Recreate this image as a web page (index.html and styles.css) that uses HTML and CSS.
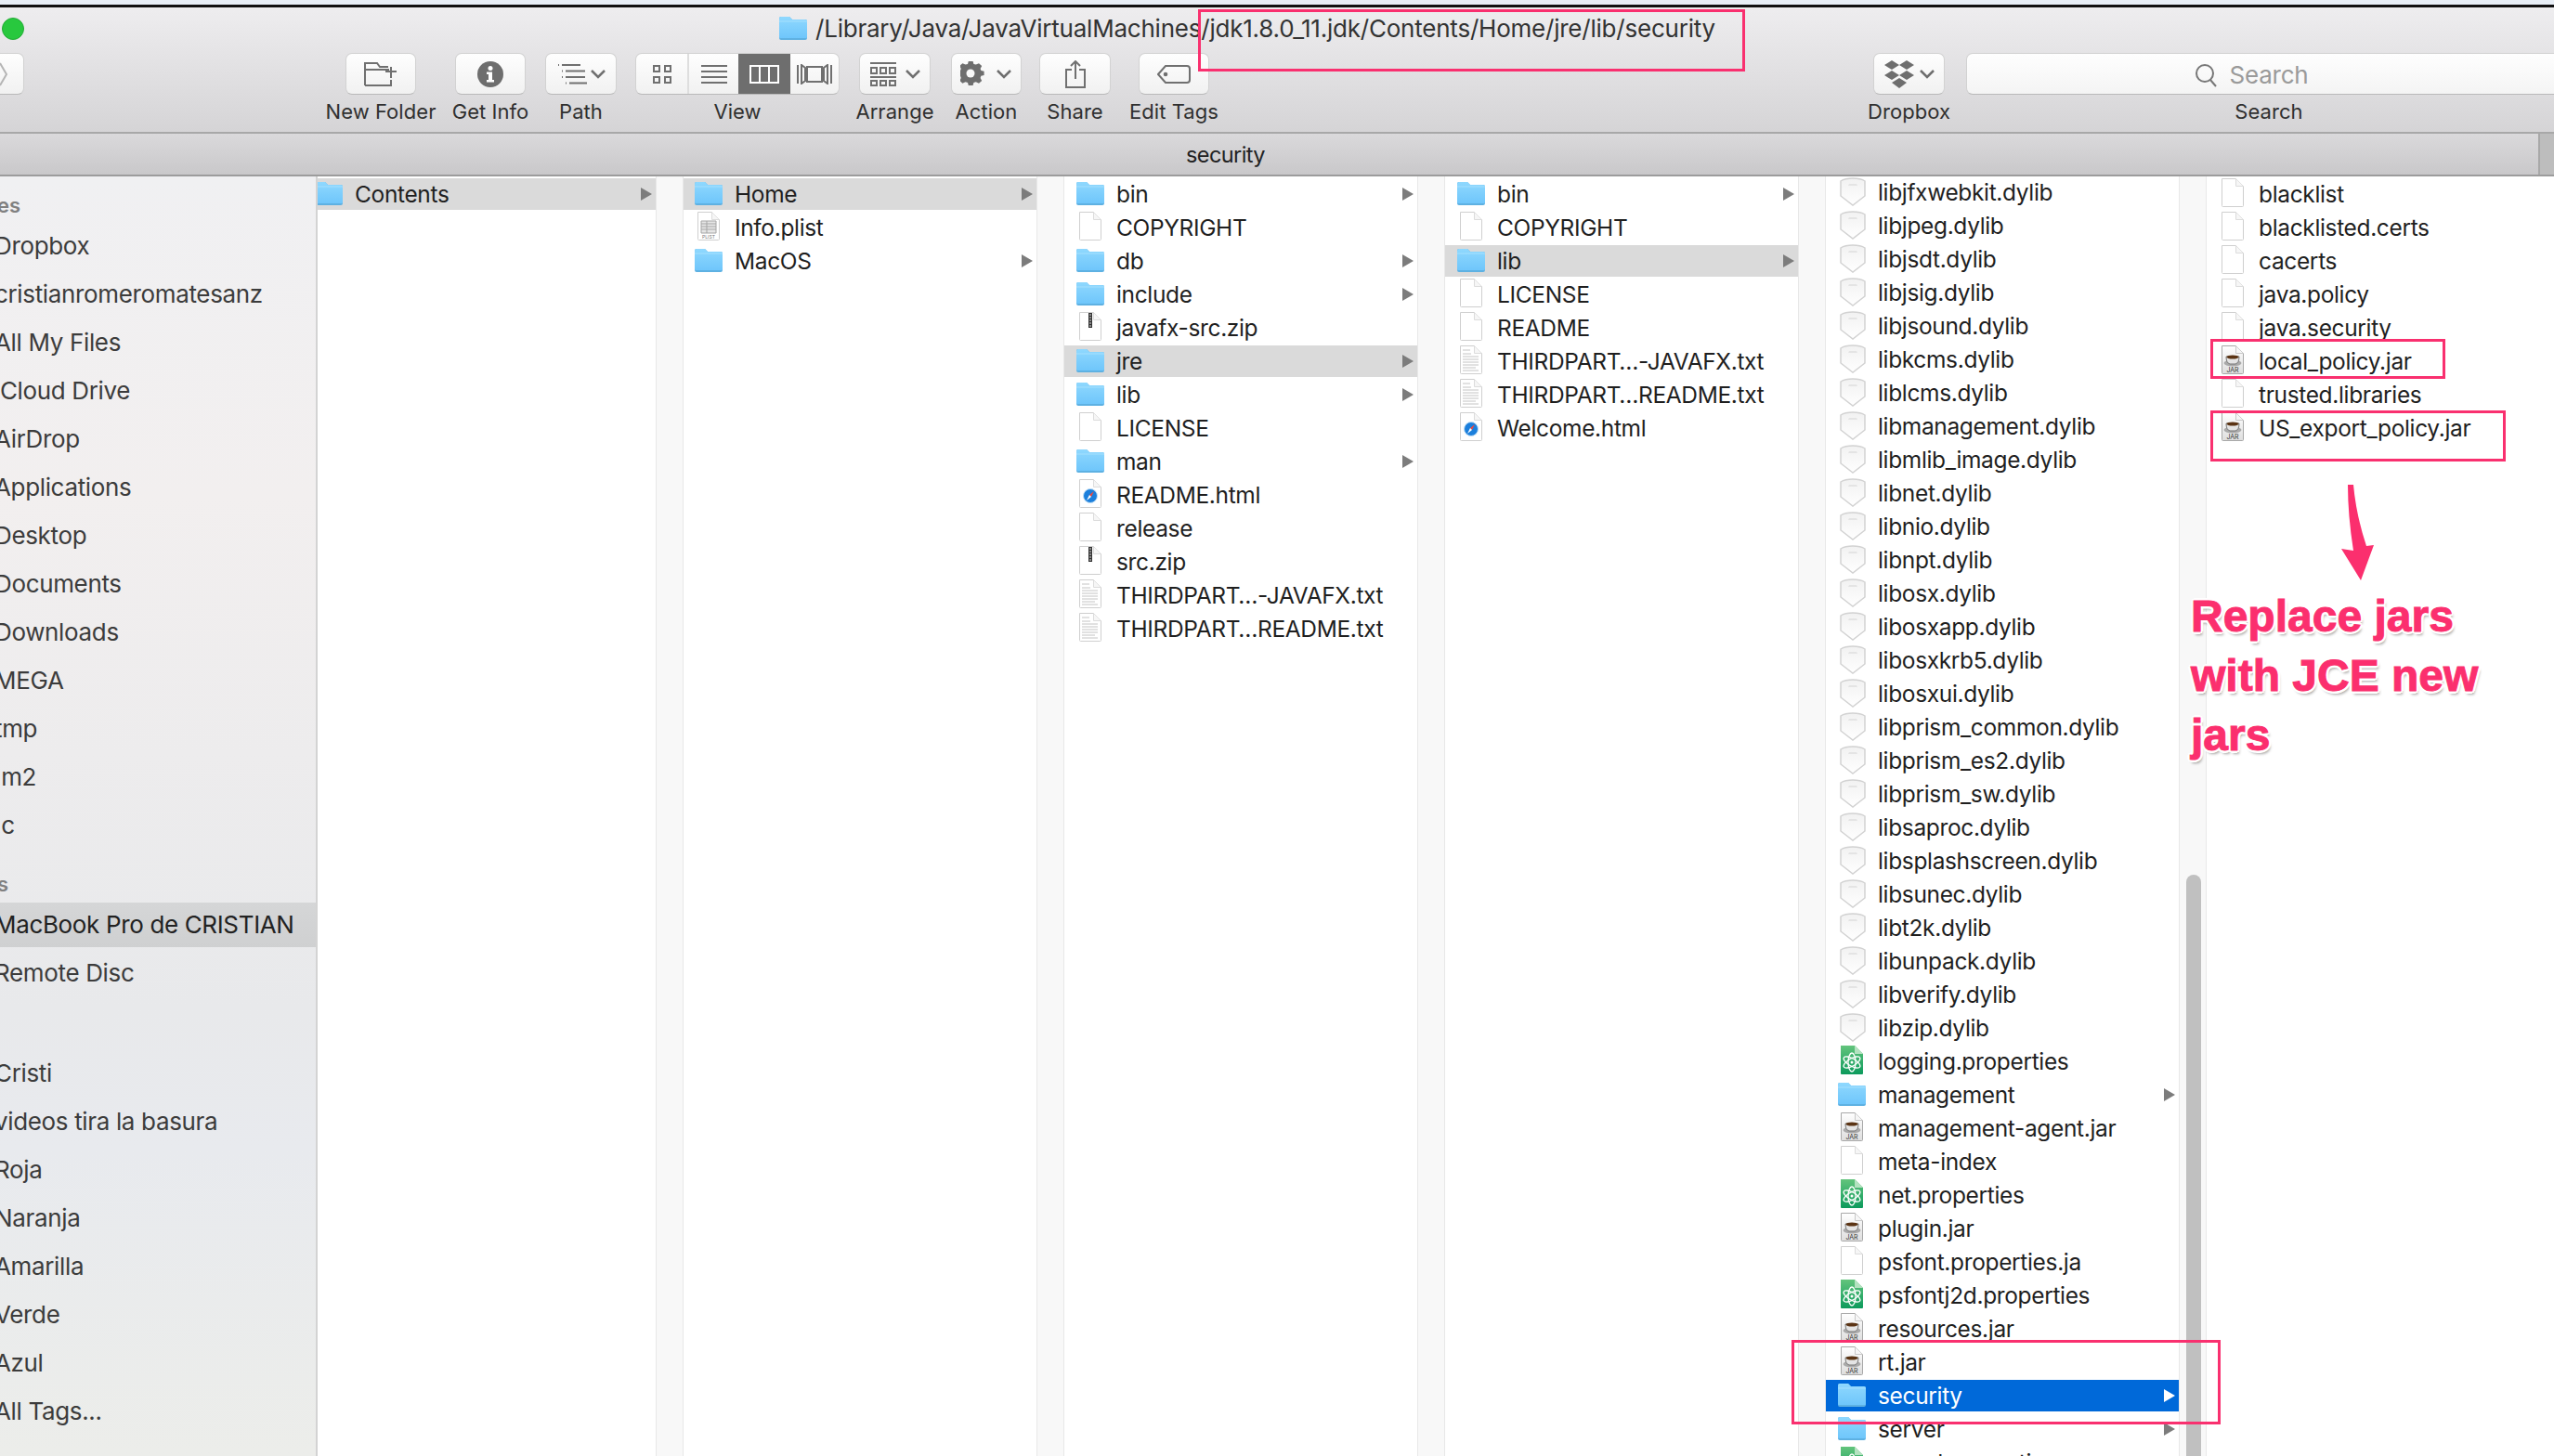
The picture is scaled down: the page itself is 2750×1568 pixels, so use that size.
FILE: index.html
```html
<!DOCTYPE html>
<html lang="en">

<head>
    <meta charset="UTF-8">
    <title>security</title>
    <link rel="stylesheet" href="styles.css">
</head>

<body>
    <!-- Icon set used by the file rows -->
    <svg class="defs" width="0" height="0">
        <defs>
            <linearGradient id="folderFill" x1="0" y1="0" x2="0" y2="1">
                <stop offset="0" stop-color="#8fd8fe"/>
                <stop offset="1" stop-color="#6fc6fb"/>
            </linearGradient>
            <linearGradient id="propsFill" x1="0" y1="0" x2="0" y2="1">
                <stop offset="0" stop-color="#63c47c"/>
                <stop offset="1" stop-color="#0c9a5c"/>
            </linearGradient>
            <linearGradient id="jarFill" x1="0" y1="0" x2="0" y2="1">
                <stop offset="0" stop-color="#ffffff"/>
                <stop offset="1" stop-color="#dedede"/>
            </linearGradient>
            <linearGradient id="shieldFill" x1="0" y1="0" x2="0" y2="1">
                <stop offset="0" stop-color="#f1f1f1"/>
                <stop offset="1" stop-color="#ffffff"/>
            </linearGradient>
            <symbol id="i-folder" viewBox="0 0 30 34">
                <path d="M0 6q0-2 2-2h9l3 3h14q2 0 2 2v18q0 2-2 2H2q-2 0-2-2z" fill="#5eb1e2"/>
                <path d="M0 6q0-2 2-2h9l3 3h14q2 0 2 2v17q0 1-1 1H1q-1 0-1-1z" fill="url(#folderFill)"/>
                <path d="M0 9h30" stroke="#a6e0fe" stroke-width="1"/>
            </symbol>
            <symbol id="i-file" viewBox="0 0 30 34">
                <path d="M3.500.5h15l8 8v21q0 1-1 1h-21q-1 0-1-1z" fill="#fff" stroke="#cfcfcf"/>
                <path d="M18.500.5v8h8" fill="#f6f6f6" stroke="#dcdcdc"/>
            </symbol>
            <symbol id="i-zip" viewBox="0 0 30 34">
                <use href="#i-file"/>
                <path d="M13 1h4v16h-4z" fill="#333"/>
                <path d="M14 3h2M14 6h2M14 9h2M14 12h2M14 15h2" stroke="#ddd"/>
            </symbol>
            <symbol id="i-txt" viewBox="0 0 30 34">
                <use href="#i-file"/>
                <path d="M6 5h8M6 9h9M6 12h17M6 15h17M6 18h17M6 21h17M6 24h14M6 27h17" stroke="#c4c4c4"/>
            </symbol>
            <symbol id="i-html" viewBox="0 0 30 34">
                <use href="#i-file"/>
                <circle cx="15" cy="18" r="7.500" fill="#1b7fdc" stroke="#bcdcf5"/>
                <path d="M19 13l-5 4 2 2z" fill="#f0473c"/>
                <path d="M11 23l5-4-2-2z" fill="#fff"/>
            </symbol>
            <symbol id="i-plist" viewBox="0 0 30 34">
                <use href="#i-file"/>
                <path d="M7 10h16v13H7z" fill="#e6e6e6" stroke="#a5a5a5"/>
                <path d="M7 13h16M7 16h16M7 19h16M13 10v13" stroke="#a5a5a5"/>
                <text x="15" y="29" class="ic-label">PLIST</text>
            </symbol>
            <symbol id="i-jar" viewBox="0 0 30 34">
                <path d="M3.500.5h15l8 8v21q0 1-1 1h-21q-1 0-1-1z" fill="url(#jarFill)" stroke="#a8a8a8"/>
                <path d="M18.500.5v8h8" fill="#f6f6f6" stroke="#c8c8c8"/>
                <ellipse cx="15" cy="19" rx="9.500" ry="3.500" fill="#aaa"/>
                <path d="M8 12h14q0 7-4 8h-6q-4-1-4-8z" fill="#e4e4e4" stroke="#777"/>
                <ellipse cx="15" cy="12.500" rx="6.500" ry="2" fill="#5b3414"/>
                <text x="15" y="29" class="ic-label ic-jar">JAR</text>
            </symbol>
            <symbol id="i-props" viewBox="0 0 30 34">
                <path d="M3 0h15l9 9v21q0 1-1 1H4q-1 0-1-1z" fill="url(#propsFill)"/>
                <path d="M18 0v9h9z" fill="#b4e2c0"/>
                <g fill="none" stroke="#fff" stroke-width="1.300">
                    <ellipse cx="15" cy="18" rx="10" ry="4" transform="rotate(30 15 18)"/>
                    <ellipse cx="15" cy="18" rx="10" ry="4" transform="rotate(-30 15 18)"/>
                    <ellipse cx="15" cy="18" rx="10" ry="4" transform="rotate(90 15 18)"/>
                </g>
                <circle cx="15" cy="18" r="1.500" fill="#fff"/>
            </symbol>
            <symbol id="i-shield" viewBox="0 0 30 34">
                <path d="M16 2C11 2 6 3 3 5v16l13 10 13-10V5c-3-2-8-3-13-3z" fill="url(#shieldFill)" stroke="#d2d2d2" stroke-width="1.500"/>
                <path d="M12 8h8l1 2h-10z" fill="#e4e4e4"/>
            </symbol>
            <symbol id="i-arrow" viewBox="0 0 12 14">
                <path d="M0 0l12 7-12 7z"/>
            </symbol>
        </defs>
    </svg>

    <div class="window">
        <div class="strip"></div>

        <header class="chrome">
            <div class="title">
                <div class="light"></div>
                <svg class="ic"><use href="#i-folder"/></svg>
                <span>/Library/Java/JavaVirtualMachines/jdk1.8.0_11.jdk/Contents/Home/jre/lib/security</span>
            </div>

            <div class="toolbar">
                <div class="tool t-nav">
                    <div class="btn btn-nav">
                        <svg width="10" height="26" viewBox="0 0 10 26"><path d="M1 1l7 12-7 12" fill="none" stroke="#b5b5b5" stroke-width="2"/></svg>
                    </div>
                </div>
                <div class="tool t-newfolder">
                    <div class="btn">
                        <svg width="36" height="26" viewBox="0 0 36 26" class="tb"><path d="M1 25V1h13l3 4h9M1 8h26M1 25h28v-6M29 5v12M23 10h12"/></svg>
                    </div>
                    <span>New Folder</span>
                </div>
                <div class="tool t-info">
                    <div class="btn">
                        <svg width="28" height="28" viewBox="0 0 28 28"><circle cx="14" cy="14" r="14" fill="#6e6e6e"/><circle cx="14" cy="7.500" r="2.500" fill="#fff"/><path d="M10 11.500h6V20h2v2.500h-8V20h2v-6h-2z" fill="#fff"/></svg>
                    </div>
                    <span>Get Info</span>
                </div>
                <div class="tool t-path">
                    <div class="btn">
                        <svg width="56" height="22" viewBox="0 0 56 22" class="tb"><path d="M3 1h1M7 1h20M7 7.500h1M11 7.500h21M7 14h1M11 14h21M11 20.500h1M15 20.500h19"/><path d="M39 7l7 7 7-7" stroke-width="2.500"/></svg>
                    </div>
                    <span>Path</span>
                </div>
                <div class="tool t-view">
                    <div class="segs">
                        <div class="seg seg-a">
                            <svg width="20" height="20" viewBox="0 0 20 20" class="tb"><path d="M1 1h6v6H1zM13 1h6v6h-6zM1 13h6v6H1zM13 13h6v6h-6z"/></svg>
                        </div>
                        <div class="seg seg-b">
                            <svg width="28" height="20" viewBox="0 0 28 20" class="tb"><path d="M0 1h28M0 7h28M0 13h28M0 19h28"/></svg>
                        </div>
                        <div class="seg seg-c">
                            <svg width="32" height="20" viewBox="0 0 32 20" class="tb tb-on"><path d="M1 1h30v18H1zM11 1v18M21 1v18"/></svg>
                        </div>
                        <div class="seg seg-d">
                            <svg width="38" height="22" viewBox="0 0 38 22" class="tb"><path d="M1 1v20M5 1v20l4-3V4zM37 1v20M33 1v20l-4-3V4zM11 3h16v16H11z"/></svg>
                        </div>
                    </div>
                    <span>View</span>
                </div>
                <div class="tool t-arrange">
                    <div class="btn">
                        <svg width="56" height="26" viewBox="0 0 56 26" class="tb"><path d="M1 1h28M1 16h28M2 6h6v6H2zM12 6h6v6h-6zM22 6h6v6h-6zM2 20h6v5H2zM12 20h6v5h-6zM22 20h6v5h-6z"/><path d="M40 9l7 7 7-7" stroke-width="2.500"/></svg>
                    </div>
                    <span>Arrange</span>
                </div>
                <div class="tool t-action">
                    <div class="btn">
                        <svg width="56" height="28" viewBox="0 0 56 28"><path d="M11 0h6l1 4 3 1 4-2 4 4-2 4 1 3 4 1v6l-4 1-1 3 2 4-4 4-4-2-3 1-1 4h-6l-1-4-3-1-4 2-4-4 2-4-1-3-4-1v-6l4-1 1-3-2-4 4-4 4 2 3-1z" transform="scale(.8 .72)" fill="#6e6e6e"/><circle cx="11" cy="13" r="4.500" fill="#f8f8f8"/><path d="M40 10l7 7 7-7" fill="none" stroke="#6e6e6e" stroke-width="2.500"/></svg>
                    </div>
                    <span>Action</span>
                </div>
                <div class="tool t-share">
                    <div class="btn">
                        <svg width="22" height="30" viewBox="0 0 22 30" class="tb"><path d="M7 10H1v19h20V10h-6M11 20V1M6 6l5-5 5 5"/></svg>
                    </div>
                    <span>Share</span>
                </div>
                <div class="tool t-tags">
                    <div class="btn">
                        <svg width="36" height="20" viewBox="0 0 36 20" class="tb"><path d="M9 1h23q3 0 3 3v12q0 3-3 3H9l-8-9z"/><circle cx="9" cy="10" r="1.300" fill="#6e6e6e"/></svg>
                    </div>
                    <span>Edit Tags</span>
                </div>
                <div class="tool t-dropbox">
                    <div class="btn">
                        <svg width="56" height="30" viewBox="0 0 56 30"><g fill="#6e6e6e"><path d="M9 0l8 5-8 5-8-5zM25 0l8 5-8 5-8-5zM9 11l8 5-8 5-8-5zM25 11l8 5-8 5-8-5zM17 19l8 5-8 6-8-6z"/></g><path d="M40 11l7 7 7-7" fill="none" stroke="#6e6e6e" stroke-width="2.500"/></svg>
                    </div>
                    <span>Dropbox</span>
                </div>
                <div class="tool t-search">
                    <div class="search-box">
                        <svg width="24" height="26" viewBox="0 0 24 26" fill="none" stroke="#777" stroke-width="2"><circle cx="10" cy="11" r="9"/><path d="M16 18l6 7"/></svg>
                        <span class="placeholder">Search</span>
                    </div>
                    <span>Search</span>
                </div>
            </div>
        </header>

        <div class="pathbar">
            <span class="path-name">security</span>
            <div class="path-end"></div>
        </div>

        <div class="browser">
            <aside class="side">
                <div class="side-head">Favorites</div>
                <div class="side-item">Dropbox</div>
                <div class="side-item">cristianromeromatesanz</div>
                <div class="side-item">All My Files</div>
                <div class="side-item">iCloud Drive</div>
                <div class="side-item">AirDrop</div>
                <div class="side-item">Applications</div>
                <div class="side-item">Desktop</div>
                <div class="side-item">Documents</div>
                <div class="side-item">Downloads</div>
                <div class="side-item">MEGA</div>
                <div class="side-item">tmp</div>
                <div class="side-item">.m2</div>
                <div class="side-item">.c</div>
                <div class="side-head head-gap">Devices</div>
                <div class="side-item side-sel">MacBook Pro de CRISTIAN</div>
                <div class="side-item">Remote Disc</div>
                <div class="side-head head-tags">Tags</div>
                <div class="side-item">Cristi</div>
                <div class="side-item">videos tira la basura</div>
                <div class="side-item">Roja</div>
                <div class="side-item">Naranja</div>
                <div class="side-item">Amarilla</div>
                <div class="side-item">Verde</div>
                <div class="side-item">Azul</div>
                <div class="side-item">All Tags...</div>
            </aside>

            <div class="col col-1">
                <div class="row row-hi"><svg class="ic"><use href="#i-folder"/></svg><span>Contents</span><svg class="arr"><use href="#i-arrow"/></svg></div>
            </div>

            <div class="col col-2">
                <div class="row row-hi"><svg class="ic"><use href="#i-folder"/></svg><span>Home</span><svg class="arr"><use href="#i-arrow"/></svg></div>
                <div class="row"><svg class="ic"><use href="#i-plist"/></svg><span>Info.plist</span></div>
                <div class="row"><svg class="ic"><use href="#i-folder"/></svg><span>MacOS</span><svg class="arr"><use href="#i-arrow"/></svg></div>
            </div>

            <div class="col">
                <div class="row"><svg class="ic"><use href="#i-folder"/></svg><span>bin</span><svg class="arr"><use href="#i-arrow"/></svg></div>
                <div class="row"><svg class="ic"><use href="#i-file"/></svg><span>COPYRIGHT</span></div>
                <div class="row"><svg class="ic"><use href="#i-folder"/></svg><span>db</span><svg class="arr"><use href="#i-arrow"/></svg></div>
                <div class="row"><svg class="ic"><use href="#i-folder"/></svg><span>include</span><svg class="arr"><use href="#i-arrow"/></svg></div>
                <div class="row"><svg class="ic"><use href="#i-zip"/></svg><span>javafx-src.zip</span></div>
                <div class="row row-hi"><svg class="ic"><use href="#i-folder"/></svg><span>jre</span><svg class="arr"><use href="#i-arrow"/></svg></div>
                <div class="row"><svg class="ic"><use href="#i-folder"/></svg><span>lib</span><svg class="arr"><use href="#i-arrow"/></svg></div>
                <div class="row"><svg class="ic"><use href="#i-file"/></svg><span>LICENSE</span></div>
                <div class="row"><svg class="ic"><use href="#i-folder"/></svg><span>man</span><svg class="arr"><use href="#i-arrow"/></svg></div>
                <div class="row"><svg class="ic"><use href="#i-html"/></svg><span>README.html</span></div>
                <div class="row"><svg class="ic"><use href="#i-file"/></svg><span>release</span></div>
                <div class="row"><svg class="ic"><use href="#i-zip"/></svg><span>src.zip</span></div>
                <div class="row"><svg class="ic"><use href="#i-txt"/></svg><span>THIRDPART…-JAVAFX.txt</span></div>
                <div class="row"><svg class="ic"><use href="#i-txt"/></svg><span>THIRDPART…README.txt</span></div>
            </div>

            <div class="col">
                <div class="row"><svg class="ic"><use href="#i-folder"/></svg><span>bin</span><svg class="arr"><use href="#i-arrow"/></svg></div>
                <div class="row"><svg class="ic"><use href="#i-file"/></svg><span>COPYRIGHT</span></div>
                <div class="row row-hi"><svg class="ic"><use href="#i-folder"/></svg><span>lib</span><svg class="arr"><use href="#i-arrow"/></svg></div>
                <div class="row"><svg class="ic"><use href="#i-file"/></svg><span>LICENSE</span></div>
                <div class="row"><svg class="ic"><use href="#i-file"/></svg><span>README</span></div>
                <div class="row"><svg class="ic"><use href="#i-txt"/></svg><span>THIRDPART…-JAVAFX.txt</span></div>
                <div class="row"><svg class="ic"><use href="#i-txt"/></svg><span>THIRDPART…README.txt</span></div>
                <div class="row"><svg class="ic"><use href="#i-html"/></svg><span>Welcome.html</span></div>
            </div>

            <div class="col col-5">
                <div class="row"><svg class="ic"><use href="#i-shield"/></svg><span>libjfxwebkit.dylib</span></div>
                <div class="row"><svg class="ic"><use href="#i-shield"/></svg><span>libjpeg.dylib</span></div>
                <div class="row"><svg class="ic"><use href="#i-shield"/></svg><span>libjsdt.dylib</span></div>
                <div class="row"><svg class="ic"><use href="#i-shield"/></svg><span>libjsig.dylib</span></div>
                <div class="row"><svg class="ic"><use href="#i-shield"/></svg><span>libjsound.dylib</span></div>
                <div class="row"><svg class="ic"><use href="#i-shield"/></svg><span>libkcms.dylib</span></div>
                <div class="row"><svg class="ic"><use href="#i-shield"/></svg><span>liblcms.dylib</span></div>
                <div class="row"><svg class="ic"><use href="#i-shield"/></svg><span>libmanagement.dylib</span></div>
                <div class="row"><svg class="ic"><use href="#i-shield"/></svg><span>libmlib_image.dylib</span></div>
                <div class="row"><svg class="ic"><use href="#i-shield"/></svg><span>libnet.dylib</span></div>
                <div class="row"><svg class="ic"><use href="#i-shield"/></svg><span>libnio.dylib</span></div>
                <div class="row"><svg class="ic"><use href="#i-shield"/></svg><span>libnpt.dylib</span></div>
                <div class="row"><svg class="ic"><use href="#i-shield"/></svg><span>libosx.dylib</span></div>
                <div class="row"><svg class="ic"><use href="#i-shield"/></svg><span>libosxapp.dylib</span></div>
                <div class="row"><svg class="ic"><use href="#i-shield"/></svg><span>libosxkrb5.dylib</span></div>
                <div class="row"><svg class="ic"><use href="#i-shield"/></svg><span>libosxui.dylib</span></div>
                <div class="row"><svg class="ic"><use href="#i-shield"/></svg><span>libprism_common.dylib</span></div>
                <div class="row"><svg class="ic"><use href="#i-shield"/></svg><span>libprism_es2.dylib</span></div>
                <div class="row"><svg class="ic"><use href="#i-shield"/></svg><span>libprism_sw.dylib</span></div>
                <div class="row"><svg class="ic"><use href="#i-shield"/></svg><span>libsaproc.dylib</span></div>
                <div class="row"><svg class="ic"><use href="#i-shield"/></svg><span>libsplashscreen.dylib</span></div>
                <div class="row"><svg class="ic"><use href="#i-shield"/></svg><span>libsunec.dylib</span></div>
                <div class="row"><svg class="ic"><use href="#i-shield"/></svg><span>libt2k.dylib</span></div>
                <div class="row"><svg class="ic"><use href="#i-shield"/></svg><span>libunpack.dylib</span></div>
                <div class="row"><svg class="ic"><use href="#i-shield"/></svg><span>libverify.dylib</span></div>
                <div class="row"><svg class="ic"><use href="#i-shield"/></svg><span>libzip.dylib</span></div>
                <div class="row"><svg class="ic"><use href="#i-props"/></svg><span>logging.properties</span></div>
                <div class="row"><svg class="ic"><use href="#i-folder"/></svg><span>management</span><svg class="arr"><use href="#i-arrow"/></svg></div>
                <div class="row"><svg class="ic"><use href="#i-jar"/></svg><span>management-agent.jar</span></div>
                <div class="row"><svg class="ic"><use href="#i-file"/></svg><span>meta-index</span></div>
                <div class="row"><svg class="ic"><use href="#i-props"/></svg><span>net.properties</span></div>
                <div class="row"><svg class="ic"><use href="#i-jar"/></svg><span>plugin.jar</span></div>
                <div class="row"><svg class="ic"><use href="#i-file"/></svg><span>psfont.properties.ja</span></div>
                <div class="row"><svg class="ic"><use href="#i-props"/></svg><span>psfontj2d.properties</span></div>
                <div class="row"><svg class="ic"><use href="#i-jar"/></svg><span>resources.jar</span></div>
                <div class="row"><svg class="ic"><use href="#i-jar"/></svg><span>rt.jar</span></div>
                <div class="row row-sel"><svg class="ic"><use href="#i-folder"/></svg><span>security</span><svg class="arr"><use href="#i-arrow"/></svg></div>
                <div class="row"><svg class="ic"><use href="#i-folder"/></svg><span>server</span><svg class="arr"><use href="#i-arrow"/></svg></div>
                <div class="row"><svg class="ic"><use href="#i-props"/></svg><span>sound.properties</span></div>
            </div>

            <div class="track"><div class="thumb"></div></div>

            <div class="col col-6">
                <div class="row"><svg class="ic"><use href="#i-file"/></svg><span>blacklist</span></div>
                <div class="row"><svg class="ic"><use href="#i-file"/></svg><span>blacklisted.certs</span></div>
                <div class="row"><svg class="ic"><use href="#i-file"/></svg><span>cacerts</span></div>
                <div class="row"><svg class="ic"><use href="#i-file"/></svg><span>java.policy</span></div>
                <div class="row"><svg class="ic"><use href="#i-file"/></svg><span>java.security</span></div>
                <div class="row"><svg class="ic"><use href="#i-jar"/></svg><span>local_policy.jar</span></div>
                <div class="row"><svg class="ic"><use href="#i-file"/></svg><span>trusted.libraries</span></div>
                <div class="row"><svg class="ic"><use href="#i-jar"/></svg><span>US_export_policy.jar</span></div>
            </div>
        </div>

        <!-- Annotations drawn on top of the screenshot -->
        <div class="mark mark-title"></div>
        <div class="mark mark-local"></div>
        <div class="mark mark-us"></div>
        <div class="mark mark-rt"></div>
        <svg class="note-arrow" width="60" height="115" viewBox="0 0 60 115">
            <path d="M18 7h6q3 33 14 66l8-1-14 38-21-34 13 2Q18 40 18 7z" fill="#fb2f6e"/>
        </svg>
        <div class="note">Replace jars<br>with JCE new<br>jars</div>
    </div>
</body>

</html>
```

FILE: styles.css
```css
* {
    margin: 0;
    padding: 0;
    box-sizing: border-box;
}

body {
    background: #fff;
    font-family: Inter, 'Noto Sans', sans-serif;
    color: #1f1f1f;
}

.defs {
    position: absolute;
}

.window {
    position: relative;
    width: 2750px;
    height: 1568px;
    overflow: hidden;
    display: flex;
    flex-direction: column;
}

.strip {
    height: 5px;
    background: #e8eef6;
}

/* Title bar and toolbar */
.chrome {
    height: 139px;
    border-top: 3px solid #111;
    border-bottom: 2px solid #a8a8a8;
    background: linear-gradient(#eeedef, #d5d4d6);
}

.title {
    height: 45px;
    margin-bottom: 4px;
    display: flex;
    align-items: center;
    font-size: 26px;
    letter-spacing: -0.22px;
    color: #333;
}

.title .ic {
    margin-right: 9px;
}

.light {
    flex: none;
    width: 24px;
    height: 24px;
    margin-left: 2px;
    margin-right: 813px;
    border-radius: 50%;
    background: #28c83e;
    border: 1px solid #22ac35;
}

.toolbar {
    display: flex;
}

.tool {
    flex: none;
    display: flex;
    flex-direction: column;
    align-items: center;
    width: 76px;
    font-size: 22px;
    letter-spacing: 0.05px;
    color: #303030;
    white-space: nowrap;
}

.tool > span {
    line-height: 26px;
    margin-top: 5px;
}

.btn {
    width: 100%;
    height: 45px;
    display: flex;
    align-items: center;
    justify-content: center;
    background: linear-gradient(#fefefe, #f1f1f1);
    border: 1px solid #d2d2d2;
    border-bottom-color: #b9b9b9;
    border-radius: 7px;
}

.btn-nav {
    justify-content: flex-end;
    padding-right: 16px;
}

.tb {
    fill: none;
    stroke: #707070;
    stroke-width: 2;
}

.tb-on {
    stroke: #fff;
}

.t-nav { margin-left: -50px; }
.t-newfolder { margin-left: 346px; }
.t-info { margin-left: 42px; }
.t-path { margin-left: 21px; width: 77px; }
.t-view { margin-left: 20px; width: 220px; }
.t-arrange { margin-left: 21px; width: 77px; }
.t-action { margin-left: 22px; }
.t-share { margin-left: 19px; width: 77px; }
.t-tags { margin-left: 30px; }
.t-dropbox { margin-left: 715px; width: 77px; }
.t-search { margin-left: 23px; width: 652px; }

.segs {
    width: 100%;
    height: 45px;
    display: flex;
    background: linear-gradient(#fefefe, #f1f1f1);
    border: 1px solid #d2d2d2;
    border-bottom-color: #b9b9b9;
    border-radius: 7px;
    overflow: hidden;
}

.seg {
    display: flex;
    align-items: center;
    justify-content: center;
}

.seg-a { width: 57px; border-right: 2px solid #dedede; }
.seg-b { width: 53px; }
.seg-c { width: 56px; background: #6e6e6e; }
.seg-d { flex: 1; }

.search-box {
    width: 100%;
    height: 45px;
    padding-top: 2px;
    padding-right: 36px;
    display: flex;
    align-items: center;
    justify-content: center;
    gap: 12px;
    background: linear-gradient(#fefefe, #f4f4f4);
    border: 1px solid #d2d2d2;
    border-bottom-color: #b9b9b9;
    border-radius: 7px;
}

.placeholder {
    font-size: 26px;
    letter-spacing: -0.2px;
    color: #9a9a9a;
}

/* Path bar */
.pathbar {
    height: 46px;
    display: flex;
    align-items: center;
    border-bottom: 2px solid #9c9c9c;
    background: linear-gradient(#dad9db, #c9c8ca);
    font-size: 23.500px;
    letter-spacing: -0.6px;
    color: #222;
}

.path-name {
    margin-left: 1277px;
}

.path-end {
    margin-left: auto;
    width: 17px;
    height: 100%;
    border-left: 2px solid #a8a8a8;
    background: #bdbdbd;
}

/* Columns */
.browser {
    flex: 1;
    display: flex;
    background: #f8f8f8;
    overflow: hidden;
    font-size: 24.500px;
    letter-spacing: -0.35px;
}

.side {
    width: 342px;
    flex: none;
    display: flex;
    flex-direction: column;
    padding-top: 13px;
    border-right: 2px solid #d3d3d3;
    background: linear-gradient(#f0f0f2, #f2efef 25%, #e8e9eb 65%, #e8eaee 76%, #ecedea 100%);
    font-size: 26px;
    color: #3c3c3c;
    overflow: hidden;
}

.side-head {
    flex: none;
    height: 36px;
    line-height: 36px;
    margin-left: -76px;
    font-size: 22px;
    font-weight: 600;
    letter-spacing: 0;
    color: #808080;
}

.head-gap {
    margin-top: 19px;
}

.head-tags {
    margin-top: 20px;
}

.side-item {
    flex: none;
    height: 48px;
    line-height: 48px;
    margin: 2px 0;
    text-indent: -6px;
    white-space: nowrap;
}

.side-sel {
    background: linear-gradient(#d5d6d7, #cfd0d1);
    color: #222;
}

.col {
    flex: none;
    width: 382px;
    margin-right: 28px;
    padding-top: 2px;
    border-left: 1px solid #e8e8e8;
    border-right: 1px solid #e8e8e8;
    background: #fff;
    overflow: hidden;
}

.row {
    height: 34px;
    margin-bottom: 2px;
    padding-left: 13px;
    display: flex;
    align-items: center;
    white-space: nowrap;
}

.ic {
    flex: none;
    width: 30px;
    height: 34px;
    margin-right: 13px;
}

.ic-label {
    font-size: 5px;
    fill: #777;
    text-anchor: middle;
    letter-spacing: 0;
}

.ic-jar {
    font-size: 7px;
    fill: #333;
}

.arr {
    flex: none;
    width: 12px;
    height: 14px;
    margin-left: auto;
    margin-right: 4px;
    fill: #7c7c7c;
}

.row-hi {
    background: #dadada;
}

.row-sel {
    background: #0069d9;
    color: #fff;
}

.row-sel .arr {
    fill: #fff;
}

.col-1 {
    width: 365px;
    border-left: none;
}

.col-1 .row {
    padding-left: 0;
}

.col-1 .ic {
    margin-left: -3px;
}

.col-2 .row {
    padding-left: 12px;
}

.col-5 {
    margin-right: 0;
    padding-top: 0;
}

.col-6 {
    flex: 1;
    margin-right: 0;
    border-right: none;
}

.track {
    flex: none;
    width: 28px;
    padding: 752px 5px 0 7px;
}

.thumb {
    height: 700px;
    border-radius: 8px;
    background: #c0c0c0;
}

/* Annotations */
.mark {
    position: absolute;
    border: 3px solid #f9306f;
}

.mark-title { left: 1290px; top: 10px; width: 589px; height: 67px; }
.mark-local { left: 2380px; top: 365px; width: 253px; height: 43px; box-shadow: inset 0 3px 0 #fff; }
.mark-us { left: 2380px; top: 442px; width: 318px; height: 55px; }
.mark-rt { left: 1929px; top: 1443px; width: 462px; height: 91px; }

.note-arrow {
    position: absolute;
    left: 2510px;
    top: 515px;
}

.note {
    position: absolute;
    left: 2359px;
    top: 632px;
    font-family: 'Liberation Sans', Arial, sans-serif;
    font-size: 48px;
    font-weight: 700;
    line-height: 64px;
    color: #fb2f6e;
    -webkit-text-stroke: 1px #fb2f6e;
    text-shadow: 3px 0 0 #fff, -3px 0 0 #fff, 0 3px 0 #fff, 0 -3px 0 #fff, 2px 2px 0 #fff, -2px 2px 0 #fff, 2px -2px 0 #fff, -2px -2px 0 #fff, 2px 4px 3px rgba(0, 0, 0, 0.35);
}
```
